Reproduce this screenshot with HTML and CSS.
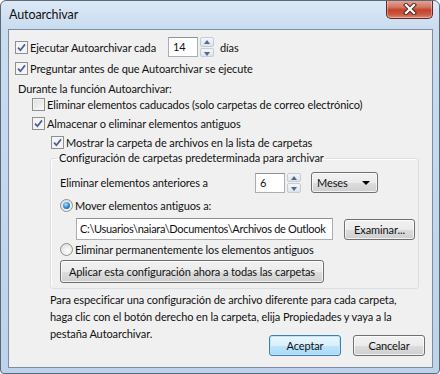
FILE: index.html
```html
<!DOCTYPE html>
<html>
<head>
    <title>Autoarchivar</title>
    <link rel="stylesheet" href="styles.css">
</head>
<body>

    <div class="window">
        <div class="titlebar">
            <span class="title">Autoarchivar</span>
            <div class="close-btn">
                <svg width="14" height="12" viewBox="0 0 14 12">
                    <path d="M3 2 L11 10 M11 2 L3 10" stroke="#4b2a24" stroke-width="4.2" stroke-linecap="square"/>
                    <path d="M3 2 L11 10 M11 2 L3 10" stroke="#fff" stroke-width="2.2" stroke-linecap="square"/>
                </svg>
            </div>
        </div>

        <div class="client">
            <div class="row r1">
                <span class="check on"><svg width="9" height="9" viewBox="0 0 9 9"><path d="M1 4.6 L3.4 7.2 L8 1.4" fill="none" stroke="#4a5f97" stroke-width="1.7"/></svg></span>
                <span class="label run-label">Ejecutar Autoarchivar cada</span>
                <span class="textbox days">14</span>
                <span class="spin"><span class="up"></span><span class="down"></span></span>
                <span class="unit">días</span>
            </div>

            <div class="row r2">
                <span class="check on"><svg width="9" height="9" viewBox="0 0 9 9"><path d="M1 4.6 L3.4 7.2 L8 1.4" fill="none" stroke="#4a5f97" stroke-width="1.7"/></svg></span>
                <span class="label">Preguntar antes de que Autoarchivar se ejecute</span>
            </div>

            <div class="row r3">
                <span>Durante la función Autoarchivar:</span>
            </div>

            <div class="row r4 indent1">
                <span class="check"></span>
                <span class="label">Eliminar elementos caducados (solo carpetas de correo electrónico)</span>
            </div>

            <div class="row r5 indent1">
                <span class="check on"><svg width="9" height="9" viewBox="0 0 9 9"><path d="M1 4.6 L3.4 7.2 L8 1.4" fill="none" stroke="#4a5f97" stroke-width="1.7"/></svg></span>
                <span class="label">Almacenar o eliminar elementos antiguos</span>
            </div>

            <div class="row r6 indent2">
                <span class="check on"><svg width="9" height="9" viewBox="0 0 9 9"><path d="M1 4.6 L3.4 7.2 L8 1.4" fill="none" stroke="#4a5f97" stroke-width="1.7"/></svg></span>
                <span class="label">Mostrar la carpeta de archivos en la lista de carpetas</span>
            </div>

            <fieldset class="group">
                <legend>Configuración de carpetas predeterminada para archivar</legend>

                <div class="row g1">
                    <span class="older-label">Eliminar elementos anteriores a</span>
                    <span class="textbox months">6</span>
                    <span class="spin"><span class="up"></span><span class="down"></span></span>
                    <span class="combo">Meses<span class="arrow"></span></span>
                </div>

                <div class="row g2">
                    <span class="radio on"></span>
                    <span class="label">Mover elementos antiguos a:</span>
                </div>

                <div class="row g3">
                    <span class="textbox path">C:\Usuarios\naiara\Documentos\Archivos de Outlook</span>
                    <span class="btn browse">Examinar...</span>
                </div>

                <div class="row g4">
                    <span class="radio"></span>
                    <span class="label">Eliminar permanentemente los elementos antiguos</span>
                </div>

                <div class="row g5">
                    <span class="btn apply">Aplicar esta configuración ahora a todas las carpetas</span>
                </div>
            </fieldset>

            <p class="note">Para especificar una configuración de archivo diferente para cada carpeta,<br>haga clic con el botón derecho en la carpeta, elija Propiedades y vaya a la<br>pestaña Autoarchivar.</p>

            <div class="actions">
                <span class="btn default">Aceptar</span>
                <span class="btn">Cancelar</span>
            </div>
        </div>
    </div>

</body>
</html>
```

FILE: styles.css
```css
* {
    box-sizing: border-box;
}
body {
    margin: 0;
    padding: 0;
    background: #fff;
    font-family: Lato, "Noto Sans", sans-serif;
    font-size: 11px;
    letter-spacing: -0.1px;
    color: #111;
}
.window {
    width: 440px;
    height: 374px;
    border: 1px solid #5a6878;
    border-radius: 6px 6px 4px 4px;
    background: linear-gradient(180deg, #dce9f7 0%, #c9dcf0 28px, #bcd3eb 100%);
    overflow: hidden;
}
.titlebar {
    height: 28px;
    display: flex;
    align-items: flex-start;
    justify-content: space-between;
}
.title {
    margin: 6px 0 0 8px;
    line-height: 16px;
    font-size: 12.5px;
}
.close-btn {
    width: 47px;
    height: 19px;
    margin: -1px 6px 0 0;
    border: 1px solid #5e2a20;
    border-top: none;
    border-radius: 0 0 5px 5px;
    background: linear-gradient(180deg, #e6a99a 0%, #d47561 40%, #c2432c 55%, #c95840 80%, #dd8a72 100%);
    box-shadow: inset 0 0 0 1px rgba(255, 255, 255, 0.35);
    display: flex;
    align-items: center;
    justify-content: center;
}
.client {
    margin: 0 0 0 7px;
    width: 425px;
    height: 339px;
    border: 1px solid #7d8c9e;
    background: #f0f0f0;
    padding: 0 7px 0 6px;
}
.row {
    display: flex;
    align-items: center;
    height: 16px;
    white-space: nowrap;
}
.label {
    margin-left: 2px;
}
.check {
    width: 13px;
    height: 13px;
    border: 1px solid #8e8f8f;
    background: linear-gradient(135deg, #dcdcdc, #fbfbfb);
    box-shadow: inset 0 0 0 1px #f4f4f4;
    display: inline-flex;
    align-items: center;
    justify-content: center;
    flex: none;
}
.check.on {
    background: #f4f4f4;
}
.radio {
    width: 13px;
    height: 13px;
    border: 1px solid #8e8f8f;
    border-radius: 50%;
    background: radial-gradient(circle at 60% 65%, #fdfdfd, #d8d8d8);
    flex: none;
    position: relative;
}
.radio.on::after {
    content: "";
    position: absolute;
    left: 2px;
    top: 2px;
    width: 7px;
    height: 7px;
    border-radius: 50%;
    background: radial-gradient(circle at 40% 35%, #a8e4fb, #2a83d2 55%, #15509a);
}
.r1 {
    margin-top: 7px;
    height: 20px;
}
.run-label {
    width: 138px;
}
.textbox {
    height: 20px;
    border: 1px solid #abadb3;
    border-top-color: #8d9298;
    background: #fff;
    padding: 1px 0 0 4px;
    line-height: 16px;
}
.days {
    width: 30px;
}
.spin {
    width: 14px;
    height: 20px;
    margin-left: 2px;
    display: flex;
    flex-direction: column;
    gap: 1px;
}
.spin span {
    flex: 1;
    border: 1px solid #c6ccd4;
    border-radius: 2px;
    background: linear-gradient(180deg, #f4f6f9, #dde3ea);
    position: relative;
}
.spin .up::after,
.spin .down::after {
    content: "";
    position: absolute;
    left: 3px;
    border-left: 3px solid transparent;
    border-right: 3px solid transparent;
}
.spin .up::after {
    top: 2px;
    border-bottom: 4px solid #4d6a8a;
}
.spin .down::after {
    top: 3px;
    border-top: 4px solid #4d6a8a;
}
.unit {
    margin-left: 6px;
}
.r2 {
    margin-top: 3px;
}
.r3 {
    margin-top: 4px;
    padding-left: 3px;
}
.indent1 {
    padding-left: 17px;
}
.indent2 {
    padding-left: 36px;
}
.r5, .r6 {
    margin-top: 3px;
}
.group {
    margin: 0 6px 0 35px;
    padding: 0 0 5px 9px;
    border: 1px solid #d5dfe5;
    border-radius: 3px;
    box-shadow: inset 1px 1px 0 #fff;
}
.group legend {
    padding: 0 2px;
    margin-left: -3px;
    line-height: 16px;
}
.g1 {
    margin-top: 6px;
    height: 21px;
}
.older-label {
    width: 195px;
}
.months {
    width: 30px;
}
.combo {
    margin-left: 10px;
    width: 67px;
    height: 21px;
    border: 1px solid #707070;
    border-radius: 3px;
    background: linear-gradient(180deg, #f2f2f2 0%, #ebebeb 50%, #dddddd 51%, #cfcfcf 100%);
    box-shadow: inset 0 0 0 1px rgba(255, 255, 255, 0.7);
    padding-left: 5px;
    display: flex;
    align-items: center;
    position: relative;
}
.combo .arrow {
    position: absolute;
    right: 7px;
    top: 8px;
    border-left: 4px solid transparent;
    border-right: 4px solid transparent;
    border-top: 4px solid #000;
}
.g2 {
    margin-top: 4px;
}
.g3 {
    margin-top: 5px;
    height: 22px;
    padding-left: 16px;
}
.path {
    width: 257px;
    height: 22px;
    padding: 2px 0 0 3px;
    letter-spacing: -0.3px;
    white-space: nowrap;
    overflow: hidden;
}
.btn {
    height: 21px;
    border: 1px solid #707070;
    border-radius: 3px;
    background: linear-gradient(180deg, #f2f2f2 0%, #ebebeb 50%, #dddddd 51%, #cfcfcf 100%);
    box-shadow: inset 0 0 0 1px rgba(255, 255, 255, 0.7);
    display: inline-flex;
    align-items: center;
    justify-content: center;
    white-space: nowrap;
}
.browse {
    width: 71px;
    margin-left: 11px;
}
.g4 {
    margin-top: 1px;
}
.g5 {
    margin-top: 3px;
    height: 23px;
}
.apply {
    width: 264px;
    height: 23px;
}
.note {
    margin: 2px 0 0 35px;
    line-height: 17px;
    white-space: nowrap;
}
.actions {
    display: flex;
    justify-content: flex-end;
    gap: 12px;
    margin-top: -7px;
}
.actions .btn {
    width: 72px;
}
.btn.default {
    border-color: #3c7fb1;
    background: linear-gradient(180deg, #eaf6fd 0%, #d9f0fc 50%, #bee6fd 51%, #a7d9f5 100%);
    box-shadow: inset 0 0 0 1px #c0e4f9;
}
```
